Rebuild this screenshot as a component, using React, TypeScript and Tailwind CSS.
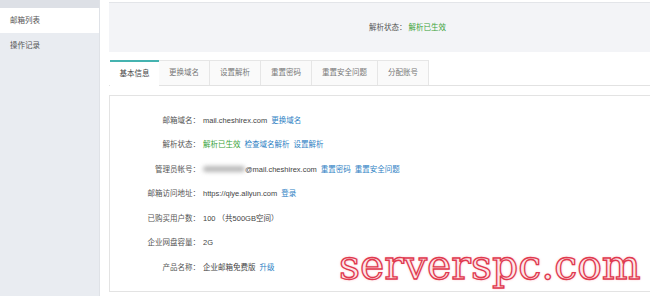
import React from 'react';

const font = { fontFamily: '"Liberation Sans", "Noto Sans CJK SC", sans-serif' };

const tabs = ['基本信息', '更换域名', '设置解析', '重置密码', '重置安全问题', '分配账号'];

const Row: React.FC<{ label: string; children: React.ReactNode }> = ({ label, children }) => (
  <div className="flex h-[24.5px] items-center">
    <div className="w-[90px] shrink-0 text-right text-[#555]">{label}：</div>
    <div className="ml-[3px] flex items-center gap-[4px] text-[#444]">{children}</div>
  </div>
);

export default function App() {
  return (
    <div className="relative flex h-[296px] w-[650px] overflow-hidden bg-white text-[7.5px]" style={font}>
      {/* sidebar */}
      <div className="w-[100px] shrink-0 border-r border-[#dfe2e7] bg-[#e9ecf1]">
        <div className="h-[8px] bg-[#dde0e6]" />
        <div className="flex h-[25px] items-center bg-white pl-[10px] text-[#555]">邮箱列表</div>
        <div className="flex h-[25px] items-center pl-[10px] text-[#555]">操作记录</div>
      </div>

      {/* main */}
      <div className="ml-[9px] flex-1 pt-[2px]">
        <div className="flex h-[50px] items-center border-t border-[#e3e5e9] bg-[#f3f4f7] pl-[260px]">
          <span className="text-[#555]">解析状态：</span>
          <span className="ml-[2px] text-[#3aa33a]">解析已生效</span>
        </div>

        <div className="mt-[8px] flex h-[26px] border-b border-[#e2e2e2]">
          {tabs.map((t, i) =>
            i === 0 ? (
              <div
                key={t}
                className="-mb-px ml-[1px] flex w-[49px] items-center justify-center border-t-2 border-[#45b3b0] bg-white text-[#444]"
              >
                {t}
              </div>
            ) : (
              <div
                key={t}
                className="flex items-center justify-center border-t border-r border-[#e6e6e6] bg-[#fafafa] px-[10px] text-[#777]"
              >
                {t}
              </div>
            )
          )}
        </div>

        <div className="mt-[9px] h-[197px] border border-r-0 border-[#e3e3e3] pt-[12px]">
          <Row label="邮箱域名">
            <span>mail.cheshirex.com</span>
            <span className="text-[#2e7fc4]">更换域名</span>
          </Row>
          <Row label="解析状态">
            <span className="text-[#3aa33a]">解析已生效</span>
            <span className="text-[#2e7fc4]">检查域名解析</span>
            <span className="text-[#2e7fc4]">设置解析</span>
          </Row>
          <Row label="管理员帐号">
            <span className="flex items-center">
              <span className="inline-block h-[6px] w-[42px] rounded-full bg-[#b9b9b9] blur-[2px]" />
              <span>@mail.cheshirex.com</span>
            </span>
            <span className="text-[#2e7fc4]">重置密码</span>
            <span className="text-[#2e7fc4]">重置安全问题</span>
          </Row>
          <Row label="邮箱访问地址">
            <span>https://qiye.aliyun.com</span>
            <span className="text-[#2e7fc4]">登录</span>
          </Row>
          <Row label="已购买用户数">
            <span>100 （共500GB空间）</span>
          </Row>
          <Row label="企业网盘容量">
            <span>2G</span>
          </Row>
          <Row label="产品名称">
            <span>企业邮箱免费版</span>
            <span className="text-[#2e7fc4]">升级</span>
          </Row>
        </div>
      </div>

      {/* watermark */}
      <div
        className="absolute left-[339px] top-[245px] text-[41px] leading-none text-[#fde6e8] [-webkit-text-stroke:1.3px_#e0394f] [text-shadow:0_0_3px_#f7a0aa]"
        style={{ fontFamily: '"DejaVu Serif", serif' }}
      >
        serverspc.com
      </div>
    </div>
  );
}
